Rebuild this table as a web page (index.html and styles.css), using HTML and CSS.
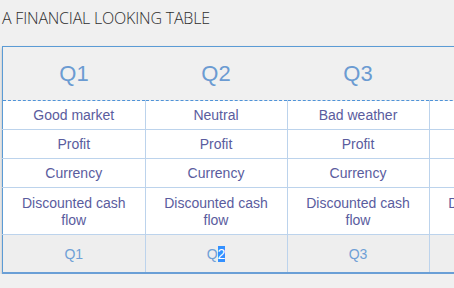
FILE: index.html
```html
<!DOCTYPE html>
<html>
<head>
<meta charset="utf-8">
<link rel="stylesheet" href="styles.css">
</head>
<body>
<h1 class="title">A Financial Looking Table</h1>
<table class="fin">
  <thead>
    <tr><th>Q1</th><th>Q2</th><th>Q3</th><th>Q4</th></tr>
  </thead>
  <tbody>
    <tr><td>Good market</td><td>Neutral</td><td>Bad weather</td><td>Crisis</td></tr>
    <tr><td>Profit</td><td>Profit</td><td>Profit</td><td>Loss</td></tr>
    <tr><td>Currency</td><td>Currency</td><td>Currency</td><td>Currency</td></tr>
    <tr><td>Discounted cash flow</td><td>Discounted cash flow</td><td>Discounted cash flow</td><td>Discounted cash flow</td></tr>
  </tbody>
  <tfoot>
    <tr><td>Q1</td><td>Q<span class="sel">2</span></td><td>Q3</td><td>Q4</td></tr>
  </tfoot>
</table>
</body>
</html>
```
FILE: styles.css
```css
html, body {
  margin: 0;
  background: #f0f0f0;
  overflow: hidden;
}
body {
  padding: 0 0 0 2px;
  width: 700px;
}
.title {
  margin: 0;
  padding: 8px 0 0 0;
  height: 46px;
  box-sizing: border-box;
  font-family: "Open Sans", sans-serif;
  font-weight: 300;
  font-size: 16px;
  line-height: 20px;
  text-transform: uppercase;
  color: #2e2e2e;
  letter-spacing: -0.2px;
}
.fin {
  border-collapse: collapse;
  table-layout: fixed;
  width: 568px;
  font-family: "Liberation Sans", Arial, sans-serif;
  border-top: 1px solid #5b9bd5;
  border-left: 1px solid #5b9bd5;
  border-bottom: 2px solid #6a9fd6;
  box-shadow: 0 2px 3px rgba(0,0,0,0.25);
}
.fin th {
  width: 142px;
  height: 53px;
  padding: 0;
  font-weight: normal;
  font-size: 22px;
  color: #6b9bd2;
  background: #f0f0f0;
  border-bottom: 1px dashed #4f93d8;
  text-align: center;
}
.fin tbody td {
  background: #fff;
  color: #5a5c9e;
  font-size: 14px;
  line-height: 17px;
  text-align: center;
  padding: 6px 8px 5px;
  border-right: 1px solid #bcd3ec;
  border-bottom: 1px solid #bcd3ec;
}
.fin tbody tr:nth-child(4) td {
  height: 35px;
}
.fin tfoot td {
  background: #eeeeee;
  color: #6fa0d6;
  font-size: 14px;
  text-align: center;
  height: 37px;
  padding: 0;
  border-right: 1px solid #bcd3ec;
}
.sel {
  background: #3390ff;
  color: #fff;
}
```
